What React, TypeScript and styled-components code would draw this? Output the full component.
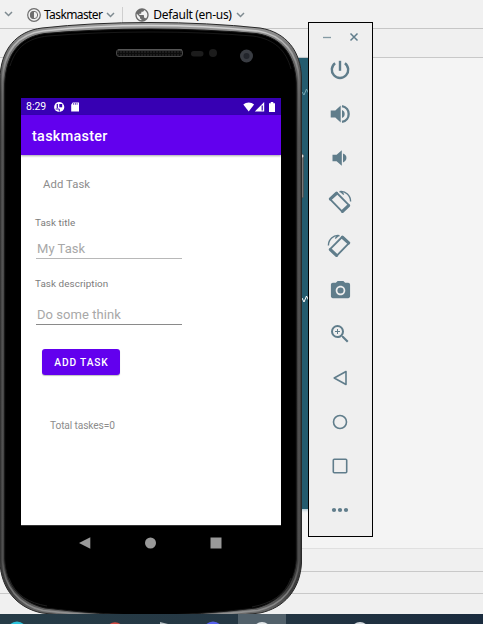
import React from "react";
import styled, { createGlobalStyle } from "styled-components";
import { MdCameraAlt, MdZoomIn, MdPublic } from "react-icons/md";

const GlobalStyle = createGlobalStyle`
  * { box-sizing: border-box; }
  html, body { margin: 0; padding: 0; overflow: hidden; }
`;

const Desktop = styled.div`
  position: relative;
  display: flex;
  flex-direction: column;
  width: 483px;
  height: 624px;
  overflow: hidden;
  background: #f4f4f4;
  font-family: "Noto Sans", "Open Sans", sans-serif;
`;

const Toolbar = styled.header`
  display: flex;
  align-items: center;
  height: 29px;
  padding-left: 4px;
  background: #f1f1f1;
  border-bottom: 1px solid #c6c6c6;
  color: #000;
  font-size: 12px;
  line-height: 28px;
  white-space: nowrap;
`;

const ToolItem = styled.div<{ $gap: number; $spacing: number }>`
  display: flex;
  align-items: center;
  height: 28px;
  margin-left: ${(p) => p.$gap}px;
  letter-spacing: ${(p) => p.$spacing}px;
  span { margin: 2px 4px 0 3px; }
  svg { margin-top: 1px; flex: none; }
`;

const ToolDivider = styled.i`
  width: 1px;
  height: 19px;
  margin-left: 7px;
  margin-top: 4px;
  background: #cfcfcf;
`;

const SubBar = styled.div`
  height: 29px;
  background: #f0f0f0;
  border-bottom: 1px solid #c8c8c8;
`;

const Editor = styled.main`
  display: flex;
  flex: 1;
  align-items: flex-start;
  padding-left: 296px;
`;

const Blueprint = styled.div`
  width: 14px;
  height: 451px;
  background: #235b6e;
  box-shadow: 0 1px 3px #9fbfcc;
`;

const BottomBar = styled.div<{ $h: number; $line: string }>`
  height: ${(p) => p.$h}px;
  background: #f0f0f0;
  border-top: 1px solid ${(p) => p.$line};
`;

const Taskbar = styled.footer`
  height: 10px;
  background: linear-gradient(90deg, #263c47, #253743 50%, #1a2b3e);
  svg { display: block; }
`;

const Phone = styled.section`
  position: absolute;
  left: 0;
  top: 0;
  width: 304px;
  height: 614px;
  overflow: hidden;
  font-family: Roboto, sans-serif;
`;

const Shell = styled.svg`
  position: absolute;
  inset: 0;
`;

const Screen = styled.div`
  position: relative;
  display: flex;
  flex-direction: column;
  width: 260px;
  margin: 98px 0 0 21px;
`;

const StatusBar = styled.div`
  display: flex;
  align-items: center;
  height: 17px;
  padding: 0 5px 0 5px;
  background: #3700b3;
  color: #fff;
  font-size: 10.5px;
  svg { display: block; }
`;

const StatusTime = styled.span`
  width: 26px;
`;

const StatusRight = styled.div`
  margin-left: auto;
`;

const AppBar = styled.div`
  position: relative;
  height: 40px;
  padding-left: 11px;
  background: #6200ee;
  color: #fff;
  font-size: 14.4px;
  font-weight: 500;
  line-height: 43px;
  letter-spacing: 0.3px;
  box-shadow: 0 1px 2px rgba(0, 0, 0, 0.35);
`;

const Form = styled.div`
  display: flex;
  flex-direction: column;
  align-items: flex-start;
  height: 370px;
  background: #fff;
  color: #8c8c8c;
`;

const Heading = styled.div`
  margin: 22px 0 0 22px;
  font-size: 11.3px;
  line-height: 15px;
  letter-spacing: 0.08px;
`;

const Label = styled.label<{ $top: number }>`
  margin: ${(p) => p.$top}px 0 0 14px;
  color: #7c7c7c;
  font-size: 9.9px;
  line-height: 12px;
  letter-spacing: 0.06px;
`;

const Field = styled.div<{ $top: number; $line: string }>`
  width: 146px;
  height: 20px;
  margin: ${(p) => p.$top}px 0 0 15px;
  padding-left: 1px;
  border-bottom: 1px solid ${(p) => p.$line};
  color: #a8a8a8;
  font-size: 13px;
  line-height: 19px;
  letter-spacing: 0.05px;
`;

const AddButton = styled.button`
  width: 78px;
  height: 26px;
  margin: 24px 0 0 21px;
  padding: 1px 0 0 1px;
  border: 0;
  border-radius: 3px;
  background: #6200ee;
  box-shadow: 0 1px 1px rgba(0, 0, 0, 0.25);
  color: #fff;
  font: 500 10.2px/25px Roboto, sans-serif;
  letter-spacing: 0.85px;
`;

const Total = styled.div`
  margin: 44px 0 0 29px;
  font-size: 10.2px;
  line-height: 14px;
  letter-spacing: -0.12px;
`;

const NavBar = styled.nav`
  display: grid;
  grid-template-columns: repeat(3, 65.3px);
  justify-content: center;
  justify-items: center;
  align-items: center;
  height: 35px;
  padding: 0 1px 1px 0;
  border-top: 1px solid #333;
  background: #000;
  svg { display: block; }
`;

const Controls = styled.aside`
  position: absolute;
  left: 308px;
  top: 22px;
  display: flex;
  flex-direction: column;
  align-items: center;
  width: 65px;
  height: 515px;
  padding-right: 1px;
  border: 1px solid #000;
  background: #efefef;
  color: #607d8b;
`;

const WindowButtons = styled.div`
  display: flex;
  width: 100%;
  height: 25px;
  flex: none;
  svg { display: block; }
`;

const ControlButton = styled.div`
  display: flex;
  align-items: center;
  justify-content: center;
  width: 44px;
  height: 44px;
  flex: none;
  svg { display: block; }
`;

const Chevron = () => (
  <svg width="9" height="6" viewBox="0 0 9 6" fill="none" stroke="#7f8b91" strokeWidth="1.5">
    <path d="M1 1l3.5 3.5L8 1" />
  </svg>
);

const ThemeIcon = () => (
  <svg width="14" height="14" viewBox="0 0 14 14" fill="none" stroke="#6e6e6e">
    <circle cx="7" cy="7" r="6.3" strokeWidth="1.2" />
    <circle cx="7" cy="7" r="3.7" />
    <path d="M7 3a4 4 0 0 0 0 8z" fill="#6e6e6e" stroke="none" />
  </svg>
);

const PowerIcon = () => (
  <svg width="24" height="24" viewBox="0 0 24 24" fill="none" stroke="currentColor" strokeWidth="2.4">
    <path d="M12 2.8v10" />
    <path d="M7.1 5.2A8.2 8.2 0 1 0 16.9 5.2" />
  </svg>
);

const VolumeUpIcon = () => (
  <svg width="24" height="24" viewBox="0 0 24 24" fill="currentColor">
    <path d="M2.7 8.6h4.6l5.4-5v16.8l-5.4-5H2.7z" />
    <path d="M14 8c3.6 1.3 3.6 6.7 0 8z" />
    <path d="M14 4.1c8.9 1.7 8.9 14.1 0 15.8" fill="none" stroke="currentColor" strokeWidth="2.3" />
  </svg>
);

const VolumeDownIcon = () => (
  <svg width="24" height="24" viewBox="0 0 24 24" fill="currentColor">
    <path d="M4.5 8.8h4.1l5.2-4.6v15.6l-5.2-4.6H4.5z" />
    <path d="M15 7.6c4.6 1.5 4.6 7.3 0 8.8z" />
  </svg>
);

const Rotate = ({ right = false }: { right?: boolean }) => (
  <svg width="26" height="26" viewBox="0 0 26 26" fill="none" stroke="currentColor">
    <g transform={right ? "translate(25 0) scale(-1 1)" : undefined}>
      <path d="M3 10.2L9.9 4L21.9 16.2L15.2 22.7Z" strokeWidth="1.8" strokeLinejoin="round" />
      <path d="M3.4 9.9L9.6 4.3M21.6 16.6L15.5 22.4" strokeWidth="3.2" strokeLinecap="round" />
      <path d="M12.5 2.7C18.7 1.7 23.6 6.4 23.6 12.6M13.5 2.6l3.3 3" strokeWidth="1.4" />
    </g>
  </svg>
);

const BackIcon = () => (
  <svg width="22" height="22" viewBox="0 0 22 22" fill="none" stroke="currentColor" strokeWidth="1.6">
    <path d="M17 4.5v13L5.2 11z" strokeLinejoin="round" />
  </svg>
);

const HomeIcon = () => (
  <svg width="22" height="22" viewBox="0 0 22 22" fill="none" stroke="currentColor" strokeWidth="1.6">
    <circle cx="11" cy="11" r="6.5" />
  </svg>
);

const OverviewIcon = () => (
  <svg width="22" height="22" viewBox="0 0 22 22" fill="none" stroke="currentColor" strokeWidth="1.6">
    <rect x="4.3" y="4.3" width="13.4" height="13.4" rx="1" />
  </svg>
);

const MoreIcon = () => (
  <svg width="18" height="6" viewBox="0 0 18 6" fill="currentColor">
    <circle cx="3" cy="3" r="2.1" />
    <circle cx="9" cy="3" r="2.1" />
    <circle cx="15" cy="3" r="2.1" />
  </svg>
);

const outline =
  "M0 80C0 49 17 31 42 28Q92 22.5 150 22.5T260 28C286 32 301 51 301.5 78V563C300 590 284 608 260 613Q200 620 151 620T42 613C17 608 1 589 0 562Z";
const innerEdge =
  "M4.7 84C6 53 20 37 45 33.5Q95 29 150 29T256 33.5C281 37 295 54 296.3 83V559C295 584 280 602 256 608Q200 615 150 615T45 608C20 602 6 585 4.7 559Z";

const PhoneShell = () => (
  <Shell width="304" height="614" viewBox="0 0 304 614">
    <defs>
      <linearGradient id="rim" x1="0" y1="22" x2="0" y2="620" gradientUnits="userSpaceOnUse">
        <stop offset="0" stopColor="#a0a0a0" />
        <stop offset=".04" stopColor="#777" />
        <stop offset=".12" stopColor="#474747" />
        <stop offset=".95" stopColor="#3b3b3b" />
        <stop offset="1" stopColor="#777" />
      </linearGradient>
      <linearGradient id="shine" x1="0" y1="22" x2="0" y2="620" gradientUnits="userSpaceOnUse">
        <stop offset="0" stopColor="#dedede" />
        <stop offset=".025" stopColor="#bcbcbc" />
        <stop offset=".1" stopColor="#707070" />
        <stop offset=".2" stopColor="#555" />
        <stop offset=".9" stopColor="#505050" />
        <stop offset="1" stopColor="#999" />
      </linearGradient>
      <pattern id="mesh" width="3" height="3" patternUnits="userSpaceOnUse">
        <rect width="3" height="3" fill="#0c0c0c" />
        <circle cx="1" cy="1" r=".7" fill="#3b3b3b" />
      </pattern>
    </defs>
    <rect x="300" y="154" width="3.5" height="44" rx="1.5" fill="#777" stroke="#444" strokeWidth=".6" />
    <circle cx="302" cy="156" r="1.5" fill="#ddd" />
    <path d={outline} fill="url(#rim)" stroke="#292929" />
    <path
      d="M2.5 82C3 50 19 34 43 31Q95 25.5 150 25.5T258 31C283 35 298 53 299 80V561C297 588 282 605 258 610.5Q200 617 150 617T43 610.5C19 605 4 587 2.5 561Z"
      fill="none"
      stroke="url(#shine)"
      strokeWidth="1.7"
    />
    <path d={innerEdge} fill="#000" stroke="#161616" />
    <path d="M10 66C16 46 29 38 48 36Q95 32 150 32T253 36C274 39 286 50 291 69" fill="none" stroke="#1e1e1e" strokeWidth=".8" />
    <path d="M9 578C15 595 29 603 47 606M291 578C285 595 272 603 252 607" fill="none" stroke="#242424" strokeWidth=".8" />
    <rect x="116.5" y="49.5" width="66" height="7" rx="2.5" fill="url(#mesh)" stroke="#464646" />
    <path d="M118 50h64" stroke="#646464" />
    <rect x="191" y="51" width="12.5" height="5.5" rx="2.7" fill="#1c1c1c" />
    <circle cx="213" cy="53" r="4" fill="#1c1c1c" />
    <circle cx="246.5" cy="56" r="6.5" fill="#393c42" />
    <circle cx="246.5" cy="56" r="3" fill="#22252b" />
  </Shell>
);

const StatusIcons = () => (
  <svg width="28" height="12" viewBox="0 0 28 12" fill="none">
    <circle cx="7.2" cy="6" r="5.1" fill="#fff" />
    <path d="M5.3 2.9v4.3" stroke="#3700b3" strokeWidth="1.2" />
    <path d="M7.3 3h2.9v3.3H7.3z" fill="#3700b3" />
    <path d="M3.6 8h3.7v2.6" stroke="#3700b3" strokeWidth=".9" />
    <path d="M20.7 1.4H27v9.2h-7.8V3.7z" fill="#fff" />
    <path d="M21.6 2v1.8M23.4 2v1.8M25.1 2v1.8" stroke="#3700b3" strokeWidth=".7" />
  </svg>
);

const SignalIcons = () => (
  <svg width="33" height="12" viewBox="0 0 33 12">
    <path d="M.3 3.6C3.2 .8 8.3 .8 11.1 3.6L5.7 10.6z" fill="#fff" />
    <path d="M11.8 10.5L21.2 1.1v9.4z" fill="#fff" />
    <path d="M19.2 4.6v5" stroke="#3700b3" strokeWidth="1.2" />
    <path d="M26 2.2h1.7V1h2.6v1.2H32v8.7h-6z" fill="#fff" />
  </svg>
);

const EmulatorScreen = () => (
  <Screen>
    <StatusBar>
      <StatusTime>8:29</StatusTime>
      <StatusIcons />
      <StatusRight>
        <SignalIcons />
      </StatusRight>
    </StatusBar>
    <AppBar>taskmaster</AppBar>
    <Form>
      <Heading>Add Task</Heading>
      <Label $top={25}>Task title</Label>
      <Field $top={10} $line="#b8b8b8">My Task</Field>
      <Label $top={19}>Task description</Label>
      <Field $top={15} $line="#8a8a8a">Do some think</Field>
      <AddButton>ADD TASK</AddButton>
      <Total>Total taskes=0</Total>
    </Form>
    <NavBar>
      <svg width="12" height="12"><path d="M0 6L11.3 .3v11.4z" fill="#999" /></svg>
      <svg width="12" height="12"><circle cx="6.5" cy="6" r="5.5" fill="#999" /></svg>
      <svg width="12" height="12"><path d="M.5 .5h11v11h-11z" fill="#999" /></svg>
    </NavBar>
  </Screen>
);

const controlIcons = [
  <PowerIcon />,
  <VolumeUpIcon />,
  <VolumeDownIcon />,
  <Rotate />,
  <Rotate right />,
  <MdCameraAlt size={23} />,
  <MdZoomIn size={24} />,
  <BackIcon />,
  <HomeIcon />,
  <OverviewIcon />,
  <MoreIcon />,
];

export default function App() {
  return (
    <Desktop>
      <GlobalStyle />
      <Toolbar>
        <Chevron />
        <ToolItem $gap={14} $spacing={-0.6}>
          <ThemeIcon />
          <span>Taskmaster</span>
          <Chevron />
        </ToolItem>
        <ToolDivider />
        <ToolItem $gap={11} $spacing={-0.3}>
          <MdPublic size={16} color="#6b6b6b" />
          <span>Default (en-us)</span>
          <Chevron />
        </ToolItem>
      </Toolbar>
      <SubBar />
      <Editor>
        <Blueprint>
          <svg width="14" height="260" fill="none" stroke="#75a4b1">
            <path d="M6 34l2 3 2.5-6 2 4" />
            <path d="M6 240l2 4 2.5-6 2 4" stroke="#fff" />
          </svg>
        </Blueprint>
      </Editor>
      <BottomBar $h={23} $line="#e0e0e0" />
      <BottomBar $h={22} $line="#c9c9c9" />
      <BottomBar $h={21} $line="#c9c9c9" />
      <Taskbar>
        <svg width="483" height="10">
          <path d="M238 0h48v10h-48z" fill="#52616b" />
          <circle cx="17" cy="17.5" r="10" fill="#2bc3dc" />
          <circle cx="115" cy="17.5" r="9.2" fill="#d24b43" />
          <path d="M160 8l8 2h-8z" fill="#b4bdc1" />
          <circle cx="213" cy="17.5" r="10" fill="#5661ec" />
          <circle cx="262" cy="17" r="9" fill="#e4e9eb" />
          <circle cx="360" cy="17" r="9" fill="#d6dce1" />
        </svg>
      </Taskbar>
      <Phone>
        <PhoneShell />
        <EmulatorScreen />
      </Phone>
      <Controls>
        <WindowButtons>
          <svg width="63" height="25" fill="none" stroke="currentColor">
            <path d="M14 14.5h8" strokeWidth="1.3" opacity=".75" />
            <path d="M41.5 10.5l7 7M48.5 10.5l-7 7" strokeWidth="1.5" />
          </svg>
        </WindowButtons>
        {controlIcons.map((icon, i) => (
          <ControlButton key={i}>{icon}</ControlButton>
        ))}
      </Controls>
    </Desktop>
  );
}
